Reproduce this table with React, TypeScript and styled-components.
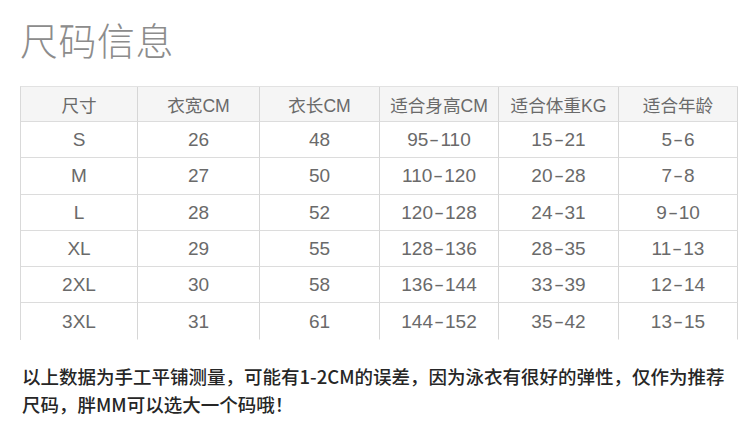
import React from "react";
import styled, { createGlobalStyle } from "styled-components";

const Global = createGlobalStyle`
  html, body { margin: 0; padding: 0; background: #fff; }
  body { font-family: "Liberation Sans", "Noto Sans CJK SC", sans-serif; }
`;

const Page = styled.div`
  width: 750px;
  height: 440px;
  box-sizing: border-box;
  padding: 14px 13px 0 20px;
  display: flex;
  flex-direction: column;
`;

const Title = styled.h1`
  margin: 0;
  font-family: "Noto Sans CJK SC", sans-serif;
  font-weight: 300;
  font-size: 38px;
  line-height: 50px;
  color: #8c8c8c;
  letter-spacing: 0.5px;
`;

const Table = styled.div`
  margin-top: 22px;
  display: grid;
  grid-template-columns: 117px 122px 120px 119px 120px 119px;
  border-top: 1px solid #e2e2e2;
  border-left: 1px solid #d9d9d9;
  width: max-content;
`;

const Cell = styled.div<{ $head?: boolean; $last?: boolean }>`
  height: ${(p) => (p.$head ? 35 : 36.3)}px;
  box-sizing: border-box;
  display: flex;
  align-items: center;
  justify-content: center;
  padding-top: ${(p) => (p.$head ? 0 : 1)}px;
  border-right: 1px solid #d6d6d6;
  border-bottom: 1px solid ${(p) => (p.$last ? "transparent" : "#dcdcdc")};
  background: ${(p) => (p.$head ? "#f5f5f5" : "#fff")};
  color: #6a6a6a;
  font-size: ${(p) => (p.$head ? 17.6 : 19)}px;
  white-space: nowrap;
`;

const Dash = styled.span`
  display: inline-block;
  width: 12px;
  text-align: center;
  transform: scaleX(1.6);
`;

const Note = styled.p`
  margin: 22px 0 0 2px;
  font-family: "Noto Sans CJK SC", sans-serif;
  font-weight: 500;
  font-size: 18.5px;
  line-height: 28px;
  color: #262626;
  width: 712px;
`;

const head = ["尺寸", "衣宽CM", "衣长CM", "适合身高CM", "适合体重KG", "适合年龄"];
const rows = [
  ["S", "26", "48", "95-110", "15-21", "5-6"],
  ["M", "27", "50", "110-120", "20-28", "7-8"],
  ["L", "28", "52", "120-128", "24-31", "9-10"],
  ["XL", "29", "55", "128-136", "28-35", "11-13"],
  ["2XL", "30", "58", "136-144", "33-39", "12-14"],
  ["3XL", "31", "61", "144-152", "35-42", "13-15"],
];

function Range({ value }: { value: string }) {
  const parts = value.split("-");
  if (parts.length !== 2) return <>{value}</>;
  return (
    <>
      {parts[0]}
      <Dash>-</Dash>
      {parts[1]}
    </>
  );
}

export default function App() {
  return (
    <>
      <Global />
      <Page>
        <Title>尺码信息</Title>
        <Table>
          {head.map((h) => (
            <Cell key={h} $head>
              {h}
            </Cell>
          ))}
          {rows.map((r, i) =>
            r.map((c, j) => (
              <Cell key={`${i}-${j}`} $last={i === rows.length - 1}>
                <Range value={c} />
              </Cell>
            ))
          )}
        </Table>
        <Note>
          以上数据为手工平铺测量，可能有1-2CM的误差，因为泳衣有很好的弹性，仅作为推荐尺码，胖MM可以选大一个码哦！
        </Note>
      </Page>
    </>
  );
}
